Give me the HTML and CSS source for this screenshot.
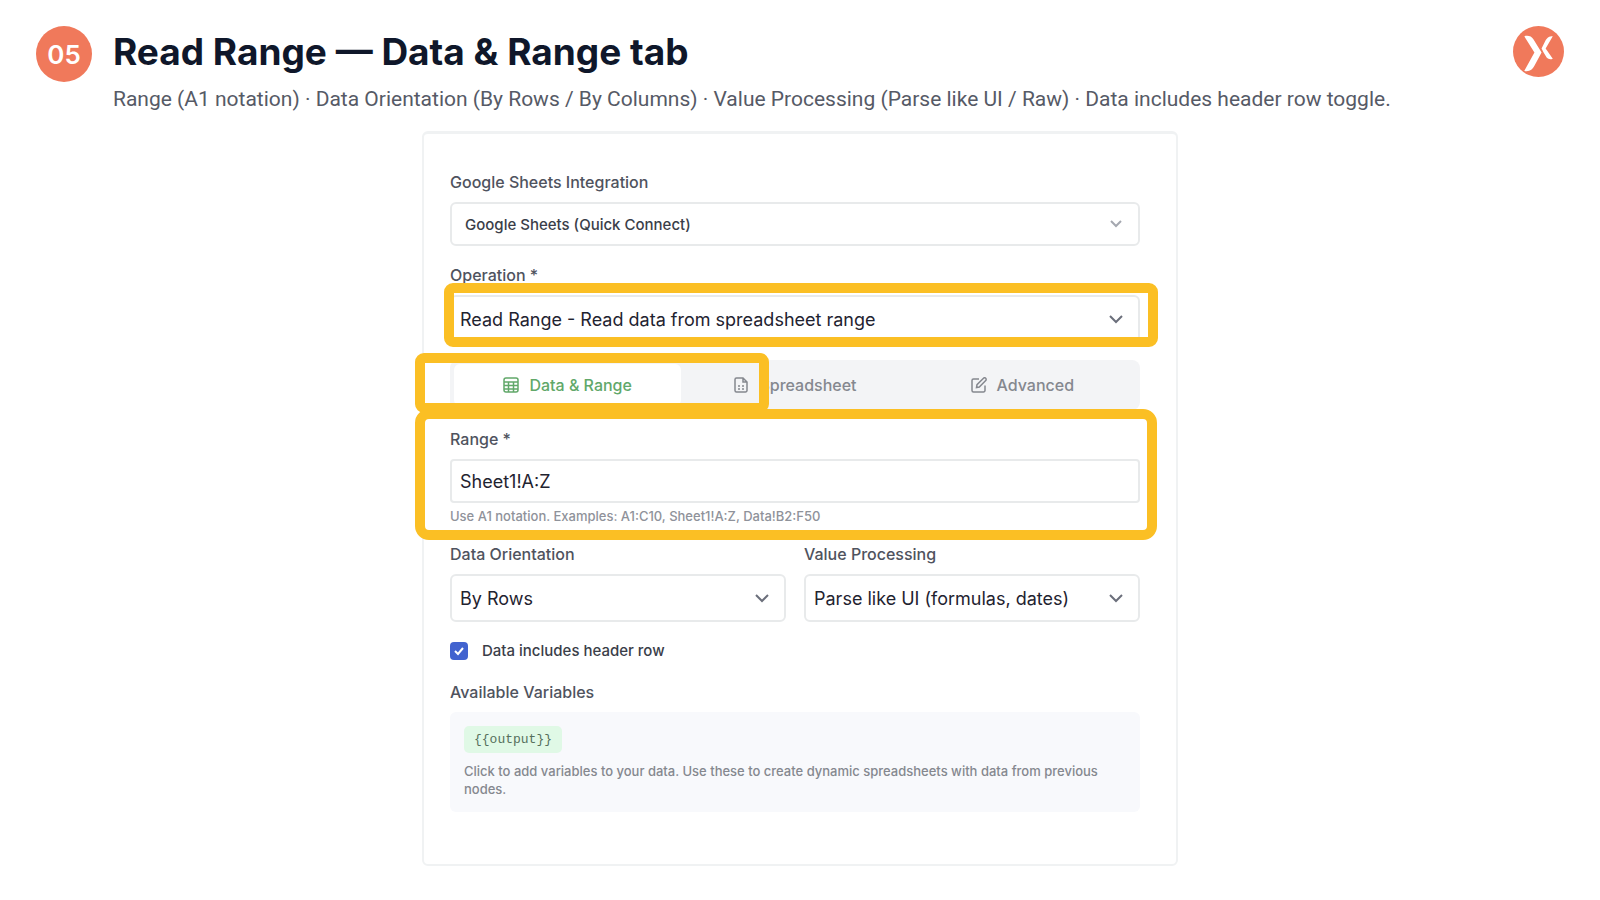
FILE: index.html
```html
<!DOCTYPE html>
<html lang="en">
<head>
    <meta charset="UTF-8">
    <meta name="viewport" content="width=device-width, initial-scale=1.0">
    <title>Read Range — Data &amp; Range tab</title>
    <link rel="stylesheet" href="styles.css">
</head>
<body>
    <header class="header">
        <span class="step">05</span>
        <div class="heading">
            <h1>Read Range — Data &amp; Range tab</h1>
            <p>Range (A1 notation) · Data Orientation (By Rows / By Columns) · Value Processing (Parse like UI / Raw) · Data includes header row toggle.</p>
        </div>
        <svg class="logo" viewBox="0 0 50 50" aria-label="Logo">
            <circle cx="25" cy="25" r="25" fill="#f0795b"/>
            <path d="M11 10c4-1 7 0 9 3l8 13-7 13c-2 4-5 6-10 5l10-18z" fill="#fff"/>
            <path d="M39 10c-4 0-5 1-7 4l-4 8 2 4 3 5c2 2 4 2 6 1l-7-10z" fill="#fff"/>
        </svg>
    </header>

    <main class="panel">
        <form>
            <div class="field">
                <label for="integration">Google Sheets Integration</label>
                <div class="control">
                    <select id="integration" class="compact">
                        <option>Google Sheets (Quick Connect)</option>
                    </select>
                    <svg class="chevron light" viewBox="0 0 16 16"><path d="M3 5l5 5 5-5"/></svg>
                </div>
            </div>

            <div class="field">
                <label for="operation">Operation *</label>
                <div class="control">
                    <select id="operation">
                        <option>Read Range - Read data from spreadsheet range</option>
                    </select>
                    <svg class="chevron" viewBox="0 0 16 16"><path d="M2 5l6 6 6-6"/></svg>
                    <div class="highlight highlight-operation"></div>
                </div>
            </div>

            <div class="tabs">
                <button type="button" class="tab active">
                    <svg viewBox="0 0 16 16"><rect x="1" y="1" width="14" height="14" rx="2"/><path d="M1 5h14M1 8.500h14M1 12h14M5.500 5v10M10.500 5v10"/></svg>
                    Data &amp; Range
                </button>
                <button type="button" class="tab">
                    <svg viewBox="0 0 16 16"><path d="M3.500 1H10l4 4v8.500a1.500 1.500 0 0 1-1.500 1.500h-9A1.500 1.500 0 0 1 2 13.500v-11A1.500 1.500 0 0 1 3.500 1zM10 1v4h4M5 9h2M9 9h2M5 12h2M9 12h2"/></svg>
                    Spreadsheet
                </button>
                <button type="button" class="tab">
                    <svg viewBox="0 0 16 16"><path d="M8 2H2.500A1.500 1.500 0 0 0 1 3.500v10A1.500 1.500 0 0 0 2.500 15h10a1.500 1.500 0 0 0 1.500-1.500V8.500M12.500 1.300a1.500 1.500 0 0 1 2.200 2.200L8.300 10 5.500 10.500 6 7.700z"/></svg>
                    Advanced
                </button>
                <div class="highlight highlight-tab"></div>
            </div>

            <div class="field range">
                <label for="range">Range *</label>
                <input type="text" id="range" value="Sheet1!A:Z">
                <p class="hint">Use A1 notation. Examples: A1:C10, Sheet1!A:Z, Data!B2:F50</p>
                <div class="highlight highlight-range"></div>
            </div>

            <div class="row">
                <div class="field">
                    <label for="orientation">Data Orientation</label>
                    <div class="control">
                        <select id="orientation">
                            <option>By Rows</option>
                            <option>By Columns</option>
                        </select>
                        <svg class="chevron" viewBox="0 0 16 16"><path d="M2 5l6 6 6-6"/></svg>
                    </div>
                </div>
                <div class="field">
                    <label for="processing">Value Processing</label>
                    <div class="control">
                        <select id="processing">
                            <option>Parse like UI (formulas, dates)</option>
                            <option>Raw</option>
                        </select>
                        <svg class="chevron" viewBox="0 0 16 16"><path d="M2 5l6 6 6-6"/></svg>
                    </div>
                </div>
            </div>

            <div class="check">
                <input type="checkbox" id="header-row" checked>
                <svg class="tick" viewBox="0 0 18 18"><path d="M5 9l3 3 5-6"/></svg>
                <label for="header-row">Data includes header row</label>
            </div>

            <div class="field">
                <h2>Available Variables</h2>
                <div class="variables">
                    <button type="button" class="chip">{{output}}</button>
                    <p>Click to add variables to your data. Use these to create dynamic spreadsheets with data from previous nodes.</p>
                </div>
            </div>
        </form>
    </main>
</body>
</html>
```

FILE: styles.css
```css
* {
    box-sizing: border-box;
}

body {
    margin: 0;
    font-family: Inter, "Liberation Sans", sans-serif;
    background-color: #fff;
    color: #1f2433;
}

h1, h2, p {
    margin: 0;
}

.header {
    display: flex;
    align-items: flex-start;
    padding: 26px 36px 0;
}

.step {
    display: flex;
    align-items: center;
    justify-content: center;
    flex: none;
    width: 56px;
    height: 56px;
    border-radius: 50%;
    background-color: #f0795b;
    color: #fff;
    font-size: 26px;
    font-weight: 600;
}

.heading {
    flex: 1;
    padding-left: 21px;
}

h1 {
    font-size: 37px;
    line-height: 52px;
    font-weight: 700;
    color: #0f172a;
}

.heading p {
    padding-top: 6px;
    font-family: Roboto, "Liberation Sans", sans-serif;
    font-size: 21px;
    line-height: 30px;
    color: #565a66;
}

.logo {
    flex: none;
    width: 51px;
    height: 51px;
}

.panel {
    max-width: 756px;
    margin: 17px auto 35px;
    padding: 36px 36px 52px 26px;
    border: 2px solid #f0f2f3;
    border-top-width: 3px;
    border-radius: 6px;
}

form {
    display: flex;
    flex-direction: column;
    gap: 17px;
}

.field {
    display: flex;
    flex-direction: column;
    gap: 8px;
}

.field label, h2 {
    font-size: 16px;
    line-height: 24px;
    font-weight: 500;
    color: #4f535e;
}

.control, .tabs, .range, .check {
    position: relative;
}

select, input[type="text"] {
    display: block;
    width: 100%;
    height: 48px;
    padding: 0 40px 0 8px;
    border: 2px solid #e8eaeb;
    border-radius: 6px;
    background-color: #fff;
    font-family: inherit;
    font-size: 18px;
    color: #1f2330;
    appearance: none;
}

select.compact {
    height: 44px;
    padding-left: 13px;
    font-size: 15px;
    font-weight: 500;
    color: #3a3e49;
}

input[type="text"] {
    height: 44px;
    border-radius: 4px;
}

.chevron {
    position: absolute;
    top: 50%;
    right: 16px;
    width: 16px;
    height: 16px;
    margin-top: -8px;
    fill: none;
    stroke: #6b6f7b;
    stroke-width: 2;
    pointer-events: none;
}

.chevron.light {
    stroke: #a5a8b0;
}

.tabs {
    display: grid;
    grid-template-columns: repeat(3, 1fr);
    height: 50px;
    padding: 4px;
    border-radius: 8px;
    background-color: #f3f4f6;
}

.tab {
    display: flex;
    align-items: center;
    justify-content: center;
    gap: 10px;
    padding: 0;
    border: none;
    border-radius: 6px;
    background: none;
    font-family: inherit;
    font-size: 16px;
    font-weight: 500;
    color: #85888f;
}

.tab.active {
    background-color: #fff;
    color: #61a86a;
}

.tab svg {
    width: 16px;
    height: 16px;
    fill: none;
    stroke: currentColor;
    stroke-width: 1.5;
}

.hint {
    margin-top: -4px;
    font-size: 13px;
    line-height: 18px;
    font-weight: 500;
    color: #8f929a;
}

.row {
    display: grid;
    grid-template-columns: 1fr 1fr;
    gap: 18px;
}

.check {
    display: flex;
    align-items: center;
    gap: 14px;
}

.check input {
    width: 18px;
    height: 18px;
    margin: 0;
    border-radius: 4px;
    background-color: #4263cf;
    appearance: none;
}

.check label {
    font-size: 15px;
    line-height: 24px;
    font-weight: 500;
    color: #3a3e49;
}

.tick {
    position: absolute;
    left: 0;
    width: 18px;
    height: 18px;
    fill: none;
    stroke: #fff;
    stroke-width: 2;
    pointer-events: none;
}

.variables {
    padding: 14px;
    border-radius: 6px;
    background-color: #f8f9fc;
}

.chip {
    display: block;
    height: 27px;
    padding: 0 10px;
    border: none;
    border-radius: 5px;
    background-color: #e0f9e6;
    font-family: "Liberation Mono", monospace;
    font-size: 13px;
    color: #56705d;
}

.variables p {
    padding-top: 9px;
    font-size: 13px;
    line-height: 18px;
    font-weight: 500;
    color: #85888f;
}

/* yellow callout frames */
.highlight {
    position: absolute;
    border: 10px solid #fbbf24;
    border-radius: 9px;
    pointer-events: none;
}

.highlight-operation {
    inset: -12px -18px -4px -6px;
}

.highlight-tab {
    inset: -7px auto -3px -35px;
    width: 354px;
}

.highlight-range {
    inset: -18px -17px -15px -35px;
    border-radius: 14px;
}
```
